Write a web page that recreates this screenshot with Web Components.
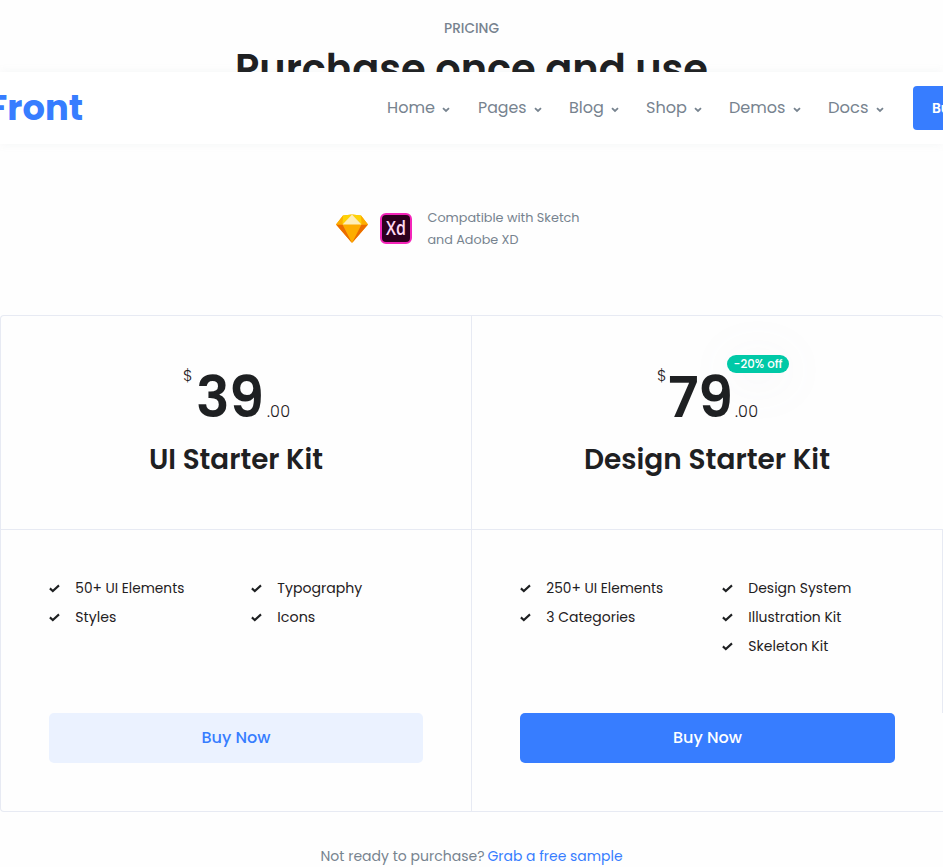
<!DOCTYPE html>
<html lang="en">
<head>
<meta charset="utf-8">
<title>Front – Pricing</title>
<style>
  html, body { margin: 0; overflow: hidden; height: 867px; background: #fefefe; }
  body { font-family: Poppins, Inter, "Open Sans", sans-serif; font-size: 14px; color: #1e2022; }
</style>
</head>
<body>
<pricing-page></pricing-page>
<script>
const attach = (el, html) => {
  el.attachShadow({ mode: 'open' }).innerHTML = html;
  return el.shadowRoot;
};

/* A single line of text that is sized (within 5%) and tracked to fill the width in its "w" attribute. */
customElements.define('fit-text', class extends HTMLElement {
  connectedCallback() {
    const w = +this.getAttribute('w');
    const root = attach(this, `<style>
      :host { display: inline-block; white-space: nowrap; flex: none; width: ${w}px; text-align: left; }
      span { display: inline-block; }
    </style><span><slot></slot></span>`);
    const span = root.querySelector('span');
    const n = this.textContent.length;
    if (n > 3) {
      const ratio = w / span.getBoundingClientRect().width;
      const size = parseFloat(getComputedStyle(span).fontSize);
      span.style.fontSize = size * Math.min(1.05, Math.max(0.96, ratio)) + 'px';
    }
    const natural = span.getBoundingClientRect().width;
    span.style.letterSpacing = ((w - natural) / (n - 1 || 1)) + 'px';
    span.style.marginRight = '-4px';
  }
});

customElements.define('nav-item', class extends HTMLElement {
  connectedCallback() {
    attach(this, `<style>
      :host { display: flex; align-items: center; width: ${this.getAttribute('span')}px; font-size: 16px; line-height: 24px; color: #77838f; }
      svg { margin: 3.5px 0 0 7px; display: block; }
    </style><fit-text w="${this.getAttribute('w')}">${this.getAttribute('label')}</fit-text>
    <svg width="8" height="6" viewBox="0 0 8 6"><path d="M1 1.2 4 4 7 1.2" fill="none" stroke="#77838f" stroke-width="1.8"/></svg>`);
  }
});

customElements.define('site-nav', class extends HTMLElement {
  connectedCallback() {
    attach(this, `<style>
      :host { position: absolute; top: 72px; left: 0; right: 0; height: 72px; background: #fff;
              box-shadow: 0 0 9px rgba(140,152,164,.09); }
      .bar { height: 72px; display: flex; align-items: center; overflow: hidden; }
      .logo { margin-left: -12px; font-size: 36px; line-height: 72px; font-weight: 700; color: #377dff; width: 399px; flex: none; }
      nav { display: flex; flex: none; height: 70px; align-items: center; }
      .buy { flex: none; width: 110px; height: 44px; border-radius: 4px; background: #377dff; color: #fff;
             font-size: 14px; font-weight: 600; line-height: 44px; padding-left: 19px; box-sizing: border-box; }
    </style>
    <div class="bar">
      <div class="logo"><fit-text w="95">Front</fit-text></div>
      <nav>
        <nav-item label="Home" w="48" span="91"></nav-item>
        <nav-item label="Pages" w="48.5" span="91"></nav-item>
        <nav-item label="Blog" w="35" span="77"></nav-item>
        <nav-item label="Shop" w="41" span="83"></nav-item>
        <nav-item label="Demos" w="56.5" span="99"></nav-item>
        <nav-item label="Docs" w="40.5" span="85"></nav-item>
      </nav>
      <div class="buy"><fit-text w="60">Buy Now</fit-text></div>
    </div>`);
  }
});

customElements.define('sketch-icon', class extends HTMLElement {
  connectedCallback() {
    attach(this, `<style>:host, svg { display: block; }</style>
    <svg width="32" height="29" viewBox="0 0 32 29">
      <path d="M7 1.4 16 .4l9 1L32 10.5 16 29 0 10.5z" fill="#fdad00"/>
      <path d="M0 10.5h6.5L16 29zM32 10.5h-6.5L16 29z" fill="#eb6c00"/>
      <path d="M7 1.4 0 10.5h6.5zM25 1.4l7 9.1h-6.5z" fill="#fdad00"/>
      <path d="M7 1.4 16 .4 6.5 10.5zM25 1.4 16 .4l9.5 10.1z" fill="#fed305"/>
      <path d="M16 .4 6.5 10.5h19z" fill="#feeeb7"/>
    </svg>`);
  }
});

customElements.define('xd-icon', class extends HTMLElement {
  connectedCallback() {
    attach(this, `<style>
      :host { display: block; box-sizing: border-box; width: 32px; height: 31px; border-radius: 6px; border: 2px solid #f425b9;
              background: #2e001e; color: #ffd9f2; font: 600 19.5px/25px "Open Sans", sans-serif; text-align: center; }
      b { display: block; font-weight: 600; transform: scaleX(.82); margin: 0 -4px; }
    </style><b>Xd</b>`);
  }
});

customElements.define('feature-item', class extends HTMLElement {
  connectedCallback() {
    attach(this, `<style>
      :host { display: flex; align-items: center; height: 29px; font-size: 14px; line-height: 29px; }
      svg { margin-right: 15.3px; display: block; }
    </style>
    <svg width="11" height="9" viewBox="0 0 11 9"><path d="M.9 4.4 3.8 7 10 1.4" fill="none" stroke="#1e2022" stroke-width="2.1"/></svg>
    <fit-text w="${this.getAttribute('w')}">${this.getAttribute('label')}</fit-text>`);
  }
});

customElements.define('price-card', class extends HTMLElement {
  connectedCallback() {
    const a = k => this.getAttribute(k);
    attach(this, `<style>
      :host { display: block; box-sizing: border-box; height: 497px; border: 1px solid #e7eaf3; border-right: 0;
              border-radius: ${a('radius')}; }
      .top { height: 213px; border-bottom: 1px solid #e7eaf3; display: flex; flex-direction: column; align-items: flex-start; }
      .price { display: flex; align-items: flex-start; position: relative; margin: 47px 0 0 ${a('price-left')}px; height: 68px; }
      .cur, .cents { font-size: 16px; line-height: 24px; font-weight: 300; }
      .cur { width: ${a('cur-span')}px; margin-top: 1px; }
      .num { font-size: 56px; font-weight: 600; line-height: 68px; width: ${a('num-span')}px; margin-top: 1px; }
      .cents { margin-top: 36.5px; }
      .title { font-size: 28px; font-weight: 600; line-height: 34px; margin: 12px 0 0 ${a('title-left')}px; }
      .features { height: 183px; box-sizing: border-box; padding: 43.5px 0 0 48px; display: grid; grid-template-columns: 202px 1fr; align-items: start; }
      :host([edge]) .features { border-right: 1px solid #e7eaf3; }
      .btn { margin: 0 0 0 48px; width: ${a('btn-w')}px; height: 50px; border-radius: 5px; display: flex; align-items: center; justify-content: center;
             font-size: 16px; line-height: 24px; padding-bottom: 1px; box-sizing: border-box; font-weight: 500; background: #ebf2ff; color: #377dff; }
      :host([edge]) .btn { background: #377dff; color: #fff; }
      ::slotted([slot=badge]) { position: absolute; left: 70px; top: -8px; }
    </style>
    <div class="top">
      <div class="price">
        <div class="cur"><fit-text w="9">$</fit-text></div>
        <div class="num"><fit-text w="${a('num-w')}">${a('num')}</fit-text></div>
        <div class="cents"><fit-text w="23">.00</fit-text></div>
        <slot name="badge"></slot>
      </div>
      <div class="title"><fit-text w="${a('title-w')}">${a('name')}</fit-text></div>
    </div>
    <div class="features"><div><slot name="left"></slot></div><div><slot name="right"></slot></div></div>
    <div class="btn"><fit-text w="69">Buy Now</fit-text></div>`);
  }
});

customElements.define('off-badge', class extends HTMLElement {
  connectedCallback() {
    attach(this, `<style>
      :host { display: block; box-sizing: border-box; width: 62px; height: 18px; border-radius: 9px; background: #00c9a7; color: #fff;
              font-size: 11.6px; font-weight: 500; line-height: 18px; padding-left: 6.5px; box-shadow: 0 6px 50px rgba(140,152,164,.1); }
    </style><fit-text w="49">−20% off</fit-text>`);
  }
});

customElements.define('pricing-page', class extends HTMLElement {
  connectedCallback() {
    attach(this, `<style>
      :host { display: block; position: relative; width: 943px; height: 867px; overflow: hidden; }
      .head { height: 213px; display: flex; flex-direction: column; align-items: center; box-sizing: border-box; padding-top: 18px; }
      .eyebrow { font-size: 14px; line-height: 20px; font-weight: 500; color: #77838f; }
      h2 { margin: 4px 0 0; font-size: 40px; line-height: 52px; font-weight: 600; }
      .compat { display: flex; height: 102px; padding-left: 336px; align-items: flex-start; }
      sketch-icon { margin: 1px 12px 0 0; }
      xd-icon { margin-right: 15.5px; }
      .note { display: flex; flex-direction: column; font-size: 13.2px; line-height: 22px; color: #77838f; margin-top: -6.5px; }
      .cards { display: grid; grid-template-columns: 471px 472px; }
      .foot { display: flex; padding-left: 320.5px; margin-top: 32px; font-size: 14px; line-height: 24px; color: #77838f; }
      .foot a { color: #377dff; margin-left: 3px; }
    </style>
    <div class="head">
      <div class="eyebrow"><fit-text w="55">PRICING</fit-text></div>
      <h2><fit-text w="473">Purchase once and use</fit-text></h2>
    </div>
    <div class="compat"><sketch-icon></sketch-icon><xd-icon></xd-icon>
      <div class="note"><fit-text w="152">Compatible with Sketch</fit-text><fit-text w="91">and Adobe XD</fit-text></div>
    </div>
    <div class="cards">
      <price-card name="UI Starter Kit" num="39" price-left="182" cur-span="13" num-span="71" num-w="68" title-left="148" title-w="174" btn-w="374" radius="4px 0 0 4px">
        <feature-item slot="left" label="50+ UI Elements" w="109"></feature-item>
        <feature-item slot="left" label="Styles" w="41"></feature-item>
        <feature-item slot="right" label="Typography" w="85"></feature-item>
        <feature-item slot="right" label="Icons" w="38"></feature-item>
      </price-card>
      <price-card edge name="Design Starter Kit" num="79" price-left="185" cur-span="11" num-span="67" num-w="65" title-left="112" title-w="246" btn-w="375" radius="0 4px 0 0">
        <off-badge slot="badge"></off-badge>
        <feature-item slot="left" label="250+ UI Elements" w="117"></feature-item>
        <feature-item slot="left" label="3 Categories" w="89"></feature-item>
        <feature-item slot="right" label="Design System" w="103"></feature-item>
        <feature-item slot="right" label="Illustration Kit" w="93"></feature-item>
        <feature-item slot="right" label="Skeleton Kit" w="80"></feature-item>
      </price-card>
    </div>
    <div class="foot"><fit-text w="164">Not ready to purchase?</fit-text><a><fit-text w="135">Grab a free sample</fit-text></a></div>
    <site-nav></site-nav>`);
  }
});
</script>
</body>
</html>
